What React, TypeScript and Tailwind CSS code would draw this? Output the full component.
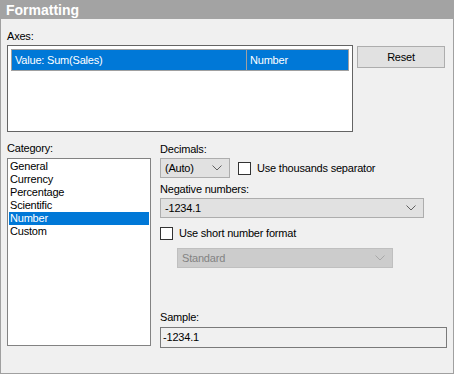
const font = "font-['Liberation_Sans',Arial,sans-serif] text-[11px] tracking-[-0.2px] leading-[15px]";

function Chevron({ disabled }: { disabled?: boolean }) {
  return (
    <svg width="10" height="6" viewBox="0 0 10 6" className="shrink-0">
      <path d="M0.5 0.5 L5 5 L9.5 0.5" fill="none" stroke={disabled ? "#a8a8a8" : "#606060"} strokeWidth="1" />
    </svg>
  );
}

function Combo({ value, width, disabled }: { value: string; width: string; disabled?: boolean }) {
  return (
    <div
      className={`${width} h-[20px] flex items-center justify-between pl-[4px] pr-[7px] border ${
        disabled ? "bg-[#cccccc] border-[#bfbfbf] text-[#838383]" : "bg-[#e1e1e1] border-[#adadad] text-black"
      }`}
    >
      <span>{value}</span>
      <Chevron disabled={disabled} />
    </div>
  );
}

function Checkbox({ label }: { label: string }) {
  return (
    <div className="flex items-center gap-[6px]">
      <div className="w-[13px] h-[13px] bg-white border border-[#333333]" />
      <span>{label}</span>
    </div>
  );
}

const categories = ["General", "Currency", "Percentage", "Scientific", "Number", "Custom"];

export default function App() {
  return (
    <div className={`w-[454px] h-[374px] bg-[#f0f0f0] border-x border-b border-[#a0a0a0] flex flex-col ${font}`}>
      {/* Header */}
      <div className="h-[19px] -mx-px bg-[#a3a3a3] pl-[6px] flex items-center">
        <span className="text-white font-bold text-[14px] tracking-normal leading-none">Formatting</span>
      </div>

      <div className="pl-[6px] flex flex-col">
        <div className="mt-[10px] h-[15px]">Axes:</div>
        <div className="mt-px flex items-start">
          {/* Axes list */}
          <div className="w-[346px] h-[87px] bg-white border border-[#646464] pt-[3px] px-[3px]">
            <div className="h-[22px] flex bg-[#0078d7] border border-[#a0a0a0] text-white">
              <div className="w-[235px] border-r border-[#a0a0a0] flex items-center pl-[3px]">Value: Sum(Sales)</div>
              <div className="flex-1 flex items-center pl-[3px]">Number</div>
            </div>
          </div>
          {/* Reset */}
          <div className="ml-[4px] mt-px w-[88px] h-[22px] bg-[#e1e1e1] border border-[#adadad] flex items-center justify-center">
            Reset
          </div>
        </div>

        <div className="mt-[9px] flex items-start">
          {/* Category */}
          <div className="flex flex-col w-[144px]">
            <div className="h-[15px]">Category:</div>
            <div className="mt-[2px] h-[188px] bg-white border border-[#828282] pt-[1px] px-px">
              {categories.map((c) => (
                <div
                  key={c}
                  className={`h-[13px] leading-[13px] pl-[1px] ${c === "Number" ? "bg-[#0078d7] text-white" : "text-black"}`}
                >
                  {c}
                </div>
              ))}
            </div>
          </div>

          {/* Options */}
          <div className="ml-[9px] flex flex-col">
            <div className="mt-[1px] h-[15px]">Decimals:</div>
            <div className="mt-px flex items-center">
              <Combo value="(Auto)" width="w-[70px]" />
              <div className="ml-[8px]">
                <Checkbox label="Use thousands separator" />
              </div>
            </div>
            <div className="mt-[4px] h-[15px]">Negative numbers:</div>
            <div className="mt-px">
              <Combo value="-1234.1" width="w-[264px]" />
            </div>
            <div className="mt-[8px]">
              <Checkbox label="Use short number format" />
            </div>
            <div className="mt-[7px] ml-[17px]">
              <Combo value="Standard" width="w-[216px]" disabled />
            </div>
            <div className="mt-[42px] h-[15px]">Sample:</div>
            <div className="mt-[2px] w-[287px] h-[21px] border border-[#7a7a7a] bg-[#f0f0f0] flex items-center pl-[2px]">
              -1234.1
            </div>
          </div>
        </div>
      </div>
    </div>
  );
}
